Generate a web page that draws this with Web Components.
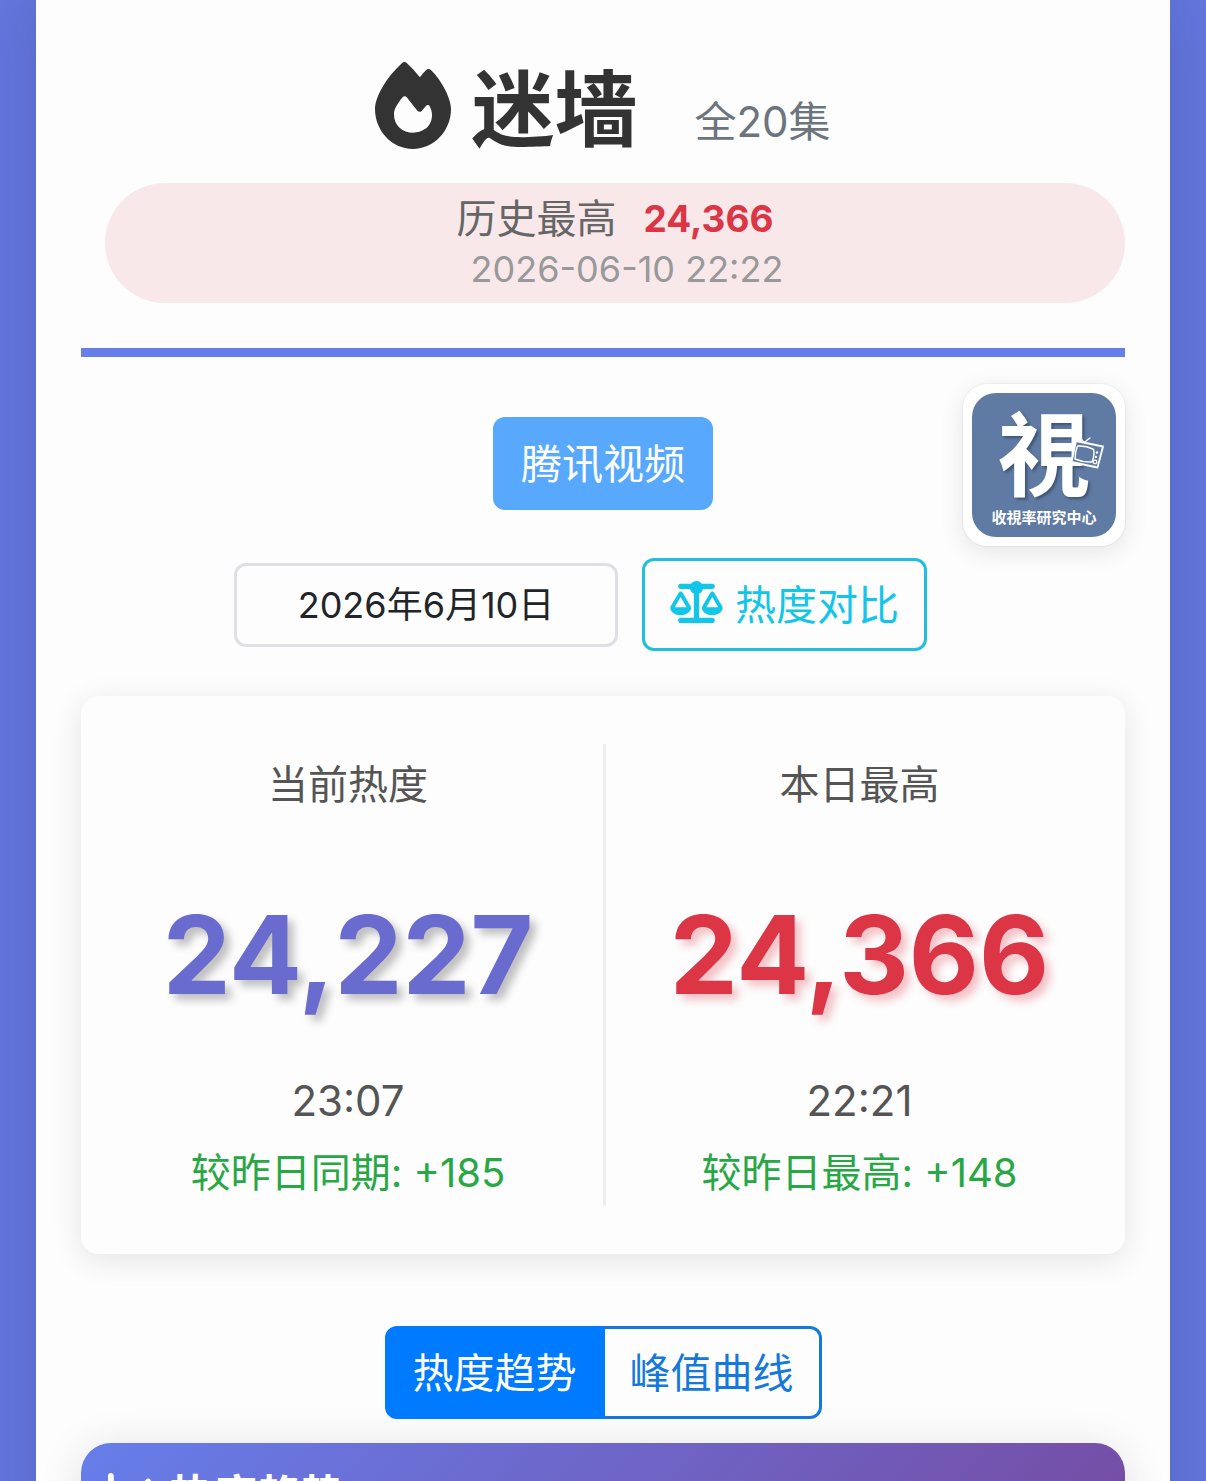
<!DOCTYPE html>
<html lang="zh-CN">
<head>
<meta charset="UTF-8">
<meta name="viewport" content="width=device-width, initial-scale=1">
<title>迷墙 - 热度</title>
<style>
    body {
        margin: 0;
        font-family: Inter, "Noto Sans CJK SC", sans-serif;
        color: #212529;
        background-color: #6276dd;
    }
</style>
</head>
<body>
<heat-page>
    <drama-header name="迷墙" episodes="全20集" label="历史最高" peak="24,366" time="2026-06-10 22:22"></drama-header>
    <heat-filters platform="腾讯视频" date="2026年6月10日" compare="热度对比">
        <center-logo char="視" caption="收視率研究中心"></center-logo>
    </heat-filters>
    <heat-board>
        <heat-stat label="当前热度" value="24,227" time="23:07" diff="较昨日同期: +185"></heat-stat>
        <heat-stat class="peak" label="本日最高" value="24,366" time="22:21" diff="较昨日最高: +148"></heat-stat>
    </heat-board>
    <chart-tabs first="热度趋势" second="峰值曲线"></chart-tabs>
    <chart-card title-text="热度趋势"></chart-card>
</heat-page>

<script>
// every component renders its own template in an open shadow root
class baseElement extends HTMLElement {
    constructor() {
        super();
        this.attachShadow({ mode: "open" });
    }
    attr(name) {
        return this.getAttribute(name) || "";
    }
    render() {
        const template = document.createElement("template");
        template.innerHTML = `${this.getStyles()}${this.getTemplate()}`;
        this.shadowRoot.replaceChildren(template.content.cloneNode(true));
    }
    connectedCallback() {
        this.render();
    }
}

class heatPage extends baseElement {
    getTemplate() {
        return `<main><slot></slot></main>`;
    }
    getStyles() {
        return `
        <style>
            :host {
                display: block;
                height: 100vh;
                padding: 0 36px;
                overflow: hidden;
            }
            main {
                min-height: 100%;
                padding: 0 45px;
                box-sizing: border-box;
                background-color: #fdfdfd;
                box-shadow: 0 0 60px rgba(0,0,0,0.12);
            }
        </style>
        `;
    }
}
customElements.define("heat-page", heatPage);

class dramaHeader extends baseElement {
    getTemplate() {
        return `
        <div class="title-row">
            <h1>
                <svg viewBox="0 0 448 512" aria-hidden="true"><path d="M159.3 5.4c7.8-7.3 19.9-7.2 27.7 .1c27.6 25.9 53.5 53.8 77.7 84c11-14.4 23.5-30.1 37-42.9c7.9-7.4 20.1-7.4 28 .1c34.6 33 63.9 76.6 84.5 118c20.3 40.8 33.8 82.5 33.8 111.9C448 404.2 348.2 512 224 512C98.4 512 0 404.1 0 276.5c0-38.4 17.8-85.3 45.4-131.7C73.3 97.7 112.7 48.6 159.3 5.4zM225.7 416c25.3 0 47.7-7 68.8-21c42.1-29.4 53.4-88.2 28.1-134.4c-4.5-9-16-9.6-22.5-2l-25.2 29.3c-6.6 7.6-18.5 7.4-24.7-.5c-16.5-21-46-58.5-62.8-79.8c-6.3-8-18.3-8.1-24.7-.1c-33.8 42.5-50.8 69.3-50.8 99.4C112 375.4 162.6 416 225.7 416z"/></svg>
                <span>${this.attr("name")}</span>
            </h1>
            <span class="episodes">${this.attr("episodes")}</span>
        </div>
        <div class="record">
            <div class="record-row">
                <span class="label">${this.attr("label")}</span>
                <strong>${this.attr("peak")}</strong>
            </div>
            <time>${this.attr("time")}</time>
        </div>
        `;
    }
    getStyles() {
        return `
        <style>
            :host {
                display: block;
                padding: 48px 0 45px;
                border-bottom: 9px solid #667eea;
            }
            .title-row {
                display: flex;
                justify-content: center;
                align-items: center;
                gap: 57px;
                height: 120px;
            }
            h1 {
                display: flex;
                align-items: center;
                gap: 20px;
                margin: 0;
                font-size: 83px;
                line-height: 120px;
                font-weight: 700;
                color: #333;
            }
            h1 svg {
                width: 76px;
                height: 87px;
                margin-bottom: 6px;
                fill: currentColor;
            }
            h1 span {
                padding-top: 4px;
            }
            .episodes {
                margin-top: 28px;
                font-size: 42px;
                line-height: 60px;
                color: #6c757d;
            }
            .record {
                display: flex;
                flex-direction: column;
                align-items: center;
                margin: 15px 0 0 24px;
                padding: 10px 0 8px;
                border-radius: 60px;
                background-color: #f8e8ea;
            }
            .record-row {
                display: flex;
                align-items: center;
                gap: 27px;
                line-height: 51px;
            }
            .label {
                font-size: 40px;
                color: #666;
            }
            strong {
                font-size: 37px;
                font-weight: 700;
                color: #dc3545;
            }
            time {
                margin-left: 24px;
                font-size: 36px;
                line-height: 51px;
                color: #999;
            }
        </style>
        `;
    }
}
customElements.define("drama-header", dramaHeader);

class centerLogo extends baseElement {
    getTemplate() {
        return `
        <div class="picture">
            <span class="char">${this.attr("char")}</span>
            <span class="caption">${this.attr("caption")}</span>
            <svg viewBox="0 0 36 36" aria-hidden="true">
                <g fill="none" stroke="#fff" stroke-linejoin="round" stroke-linecap="round">
                    <path fill="#5f7ba3" stroke-width="1.8" d="M7 6 34 11.500 28.500 32.500 2.500 27Z"/>
                    <path stroke-width="1.4" d="M8.500 11Q17 10.500 24.500 14.300Q26 20 23 27Q14 27.500 6 24Q6 17 8.500 11Z"/>
                    <path stroke-width="1.3" d="M15 7.500 10.300 1.500M15 7.500 21 3"/>
                    <circle cx="26" cy="27" r="1.8" stroke-width="1.3"/>
                </g>
                <circle cx="28" cy="17.500" r="1.2" fill="#fff"/>
                <circle cx="27" cy="22" r="1.2" fill="#fff"/>
            </svg>
        </div>
        `;
    }
    getStyles() {
        return `
        <style>
            :host {
                display: block;
                padding: 9px;
                border-radius: 24px;
                background-color: #fff;
                box-shadow: 0 0 0 1px rgba(0,0,0,0.04), 0 6px 24px rgba(0,0,0,0.1);
            }
            .picture {
                position: relative;
                display: flex;
                flex-direction: column;
                align-items: center;
                width: 144px;
                height: 144px;
                border-radius: 24px;
                background-color: #5f7ba3;
                color: #fff;
                font-family: "Noto Sans CJK TC", sans-serif;
            }
            .char {
                font-size: 92px;
                line-height: 112px;
                font-weight: 700;
                text-shadow: 2px 2px 3px rgba(40,55,85,0.6);
            }
            .caption {
                font-size: 15px;
                line-height: 24px;
                font-weight: 700;
                white-space: nowrap;
            }
            svg {
                position: absolute;
                top: 42px;
                right: 11px;
                width: 36px;
                height: 36px;
            }
        </style>
        `;
    }
}
customElements.define("center-logo", centerLogo);

class heatFilters extends baseElement {
    getTemplate() {
        return `
        <div class="platforms"><button class="platform">${this.attr("platform")}</button></div>
        <div class="tools">
            <input type="text" aria-label="日期" value="${this.attr("date")}">
            <button class="compare">
                <svg viewBox="0 0 640 512" aria-hidden="true"><path d="M384 32H512c17.700 0 32 14.300 32 32s-14.300 32-32 32H398.400c-5.200 25.800-22.900 47.100-46.400 57.300V448H512c17.700 0 32 14.300 32 32s-14.300 32-32 32H320 128c-17.700 0-32-14.300-32-32s14.300-32 32-32H288V153.300c-23.500-10.300-41.200-31.600-46.400-57.300H128c-17.700 0-32-14.300-32-32s14.300-32 32-32H256c14.600-19.400 37.800-32 64-32s49.400 12.600 64 32zm55.600 288H584.400L512 195.800 439.600 320zM512 416c-62.900 0-115.200-34-126-78.900c-2.600-11 1-22.300 6.700-32.100l95.200-163.200c5-8.600 14.200-13.800 24.100-13.800s19.100 5.300 24.100 13.800l95.200 163.200c5.700 9.800 9.300 21.100 6.700 32.100C627.200 382 574.900 416 512 416zM126.800 195.800L54.400 320H199.300L126.800 195.800zM.9 337.100c-2.600-11 1-22.300 6.700-32.100l95.200-163.200c5-8.600 14.200-13.800 24.100-13.800s19.100 5.300 24.100 13.800l95.200 163.200c5.700 9.800 9.300 21.100 6.700 32.100C242 382 189.700 416 126.800 416S11.700 382 .9 337.100z"/></svg>
                <span>${this.attr("compare")}</span>
            </button>
        </div>
        <div class="corner"><slot></slot></div>
        `;
    }
    getStyles() {
        return `
        <style>
            :host {
                display: block;
                position: relative;
                padding: 60px 0 45px;
            }
            .platforms, .tools {
                display: flex;
                justify-content: center;
                align-items: center;
            }
            .tools {
                gap: 24px;
                margin-top: 48px;
                padding-right: 45px;
            }
            button, input {
                box-sizing: border-box;
                margin: 0;
                border: 3px solid;
                border-radius: 12px;
                font-family: inherit;
                background-color: transparent;
            }
            button {
                height: 93px;
                padding: 0 25px;
                font-size: 41px;
                line-height: 60px;
            }
            .platform {
                border-color: #58a9fe;
                background-color: #58a9fe;
                color: #fff;
            }
            input {
                width: 384px;
                height: 84px;
                padding: 0 24px 6px;
                border-color: #dee0e6;
                font-size: 36px;
                text-align: center;
                color: #212529;
            }
            .compare {
                display: flex;
                align-items: center;
                gap: 12px;
                border-color: #22bedd;
                color: #12c6ea;
            }
            .compare svg {
                width: 53px;
                height: 42px;
                margin-bottom: 6px;
                fill: currentColor;
            }
            .corner {
                position: absolute;
                top: 27px;
                right: 0;
            }
        </style>
        `;
    }
}
customElements.define("heat-filters", heatFilters);

class heatBoard extends baseElement {
    getTemplate() {
        return `<section><slot></slot></section>`;
    }
    getStyles() {
        return `
        <style>
            :host {
                display: block;
            }
            section {
                display: grid;
                grid-template-columns: 1fr 1fr;
                padding: 48px 0;
                border-radius: 18px;
                background-color: #fdfdfd;
                box-shadow: 0 6px 30px rgba(0,0,0,0.1);
            }
        </style>
        `;
    }
}
customElements.define("heat-board", heatBoard);

class heatStat extends baseElement {
    getTemplate() {
        return `
        <div class="label">${this.attr("label")}</div>
        <div class="value">${this.attr("value")}</div>
        <div class="time">${this.attr("time")}</div>
        <div class="diff">${this.attr("diff")}</div>
        `;
    }
    getStyles() {
        return `
        <style>
            :host {
                display: block;
                padding: 11px 12px 0 24px;
                text-align: center;
                --heat-color: #6a6bce;
                --heat-shadow: rgba(0,0,0,0.25);
            }
            :host(.peak) {
                padding: 11px 24px 0 12px;
                border-left: 3px solid #eee;
                --heat-color: #dc3545;
                --heat-shadow: rgba(220,53,69,0.3);
            }
            .label {
                font-size: 40px;
                line-height: 60px;
                color: #555;
            }
            .value {
                margin: 72px 0 48px;
                font-size: 108px;
                line-height: 136px;
                font-weight: 700;
                color: var(--heat-color);
                text-shadow: 6px 6px 9px var(--heat-shadow);
            }
            .time {
                margin-bottom: 12px;
                font-size: 42px;
                line-height: 60px;
                color: #555;
            }
            .diff {
                padding-bottom: 3px;
                font-size: 40px;
                line-height: 60px;
                color: #28a745;
            }
        </style>
        `;
    }
}
customElements.define("heat-stat", heatStat);

class chartTabs extends baseElement {
    getTemplate() {
        return `
        <button class="active">${this.attr("first")}</button>
        <button>${this.attr("second")}</button>
        `;
    }
    getStyles() {
        return `
        <style>
            :host {
                display: flex;
                justify-content: center;
                padding: 72px 0 24px;
            }
            button {
                height: 93px;
                margin: 0;
                padding: 0 25px;
                border: 3px solid #1478dc;
                border-left: 0;
                border-radius: 0 12px 12px 0;
                background-color: transparent;
                font-family: inherit;
                font-size: 41px;
                line-height: 60px;
                color: #1478dc;
            }
            .active {
                border: 3px solid #007bff;
                border-radius: 12px 0 0 12px;
                background-color: #007bff;
                color: #fff;
            }
        </style>
        `;
    }
}
customElements.define("chart-tabs", chartTabs);

class chartCard extends baseElement {
    getTemplate() {
        return `
        <h2>
            <svg viewBox="0 0 512 512" aria-hidden="true"><path d="M64 64c0-17.700-14.300-32-32-32S0 46.300 0 64V400c0 44.200 35.800 80 80 80H480c17.700 0 32-14.300 32-32s-14.300-32-32-32H80c-8.800 0-16-7.200-16-16V64zm406.600 86.600c12.500-12.500 12.500-32.800 0-45.300s-32.800-12.500-45.300 0L320 210.700l-57.400-57.400c-12.500-12.500-32.800-12.500-45.300 0l-112 112c-12.500 12.500-12.500 32.800 0 45.300s32.800 12.500 45.300 0L240 221.300l57.400 57.400c12.500 12.500 32.800 12.500 45.300 0l128-128z"/></svg>
            <span>${this.attr("title-text")}</span>
        </h2>
        `;
    }
    getStyles() {
        return `
        <style>
            :host {
                display: block;
                height: 600px;
                border-radius: 30px;
                overflow: hidden;
                background-color: #fff;
                box-shadow: 0 6px 45px rgba(0,0,0,0.12);
            }
            h2 {
                display: flex;
                align-items: center;
                gap: 15px;
                margin: 0;
                padding: 21px 27px;
                font-size: 44px;
                line-height: 64px;
                font-weight: 700;
                color: #fff;
                background: linear-gradient(135deg, #667eea, #764ba2);
            }
            h2 svg {
                width: 46px;
                height: 46px;
                margin-bottom: 6px;
                fill: currentColor;
            }
        </style>
        `;
    }
}
customElements.define("chart-card", chartCard);
</script>
</body>
</html>
